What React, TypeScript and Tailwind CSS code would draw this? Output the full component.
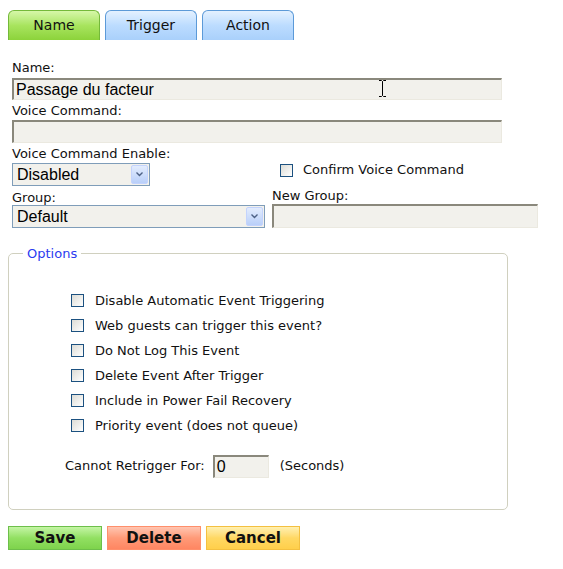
import React from "react";

const labelCls = "block h-[15px] text-[13px] leading-[15px] text-[#111] font-['DejaVu_Sans',Verdana,sans-serif]";
const textBox =
  "h-[22px] bg-[#f2f1ec] border-t-2 border-l-2 border-t-[#8a887c] border-l-[#8a887c] border-r border-b border-r-[#ebe9e0] border-b-[#ebe9e0] px-[2px] text-[16px] leading-[18px] text-black font-['Liberation_Sans',Arial,sans-serif] outline-none";

function Tab({ label, active }: { label: string; active?: boolean }) {
  return (
    <div
      className={
        "w-[92px] h-[30px] rounded-t-[6px] border border-b-0 flex items-center justify-center text-[14px] text-[#111] font-['DejaVu_Sans',Verdana,sans-serif] " +
        (active
          ? "bg-gradient-to-b from-[#d6f7a8] via-[#a8e45e] to-[#8cd33a] border-[#74b93a]"
          : "bg-gradient-to-b from-[#e4f1ff] via-[#bcdcff] to-[#a9d0fb] border-[#5c9ad8]")
      }
    >
      {label}
    </div>
  );
}

function Checkbox() {
  return (
    <span className="inline-block w-[13px] h-[13px] border border-[#1c5180] bg-gradient-to-br from-[#dcdcd6] to-[#ffffff] shrink-0" />
  );
}

function Select({ value, width }: { value: string; width: string }) {
  return (
    <div className={"h-[23px] border border-[#7f9db9] bg-[#f2f1ec] flex items-center p-[1px] " + width}>
      <span className="flex-1 pl-[3px] text-[16px] leading-[18px] text-black font-['Liberation_Sans',Arial,sans-serif]">
        {value}
      </span>
      <span className="w-[17px] h-[19px] rounded-[2px] bg-gradient-to-b from-[#e3ecfd] to-[#b9cff9] border border-[#c3d3fd] flex items-center justify-center">
        <svg width="7" height="5" viewBox="0 0 7 5">
          <path d="M0.5 0.5 L3.5 3.5 L6.5 0.5" fill="none" stroke="#4d6185" strokeWidth="1.4" />
        </svg>
      </span>
    </div>
  );
}

const options = [
  "Disable Automatic Event Triggering",
  "Web guests can trigger this event?",
  "Do Not Log This Event",
  "Delete Event After Trigger",
  "Include in Power Fail Recovery",
  "Priority event (does not queue)",
];

function Button({ label, cls }: { label: string; cls: string }) {
  return (
    <div
      className={
        "w-[94px] h-[24px] border flex items-center justify-center text-[15px] font-bold text-[#111] font-['DejaVu_Sans',Verdana,sans-serif] " +
        cls
      }
    >
      {label}
    </div>
  );
}

export default function App() {
  return (
    <div className="relative w-[563px] h-[569px] bg-white font-['DejaVu_Sans',Verdana,sans-serif]">
      <div className="flex gap-[5px] pl-[8px] pt-[10px]">
        <Tab label="Name" active />
        <Tab label="Trigger" />
        <Tab label="Action" />
      </div>

      <div className="pl-[12px] pt-[20px]">
        <span className={labelCls}>Name:</span>
        <div className={textBox + " w-[490px] mt-[3px] flex items-center"}>Passage du facteur</div>
        <span className={labelCls + " mt-[3px]"}>Voice Command:</span>
        <div className={textBox + " w-[490px] h-[23px] mt-[2px]"} />
        <span className={labelCls + " mt-[3px]"}>Voice Command Enable:</span>

        <div className="grid grid-cols-[260px_266px] mt-[2px]">
          <div>
            <Select value="Disabled" width="w-[138px]" />
          </div>
          <div className="flex items-center gap-[10px] pl-[8px] -mt-[9px]">
            <Checkbox />
            <span className="text-[13px] text-[#111]">Confirm Voice Command</span>
          </div>
          <div className="mt-[4px]">
            <span className={labelCls}>Group:</span>
            <Select value="Default" width="w-[253px]" />
          </div>
          <div className="mt-[2px]">
            <span className={labelCls}>New Group:</span>
            <div className={textBox + " w-[266px] h-[24px] mt-[1px]"} />
          </div>
        </div>
      </div>

      <fieldset className="ml-[8px] mt-[16px] w-[500px] h-[266px] border border-[#d0d0bf] rounded-[5px]">
        <legend className="ml-[14px] px-[4px] text-[13px] text-[#2b3bf0]">Options</legend>
        <div className="pl-[62px] pt-[30px]">
          <div className="flex flex-col gap-[12px]">
            {options.map((o) => (
              <div key={o} className="flex items-center gap-[11px] h-[13px]">
                <Checkbox />
                <span className="text-[13px] text-[#111] leading-[15px]">{o}</span>
              </div>
            ))}
          </div>
          <div className="flex items-center mt-[23px] -ml-[6px] text-[13px] text-[#111]">
            <span>Cannot Retrigger For:</span>
            <div className={textBox + " w-[56px] h-[23px] ml-[8px] flex items-center"}>0</div>
            <span className="ml-[11px]">(Seconds)</span>
          </div>
        </div>
      </fieldset>

      <div className="flex gap-[5px] pl-[8px] mt-[16px]">
        <Button label="Save" cls="bg-gradient-to-b from-[#c4f5a4] via-[#92e062] to-[#7ed34c] border-[#6dbf4a]" />
        <Button label="Delete" cls="bg-gradient-to-b from-[#ffc5b1] via-[#ff9a78] to-[#ff8662] border-[#ff8f6b]" />
        <Button label="Cancel" cls="bg-gradient-to-b from-[#fff0b0] via-[#ffd863] to-[#ffcf4a] border-[#f4c040]" />
      </div>

      <svg className="absolute left-[378px] top-[80px]" width="9" height="17" viewBox="0 0 9 17">
        <path d="M1 0.5 H3.5 L4.5 1.5 L5.5 0.5 H8 M4.5 1.5 V15.5 M1 16.5 H3.5 L4.5 15.5 L5.5 16.5 H8" fill="none" stroke="#000" strokeWidth="1" />
      </svg>
    </div>
  );
}
